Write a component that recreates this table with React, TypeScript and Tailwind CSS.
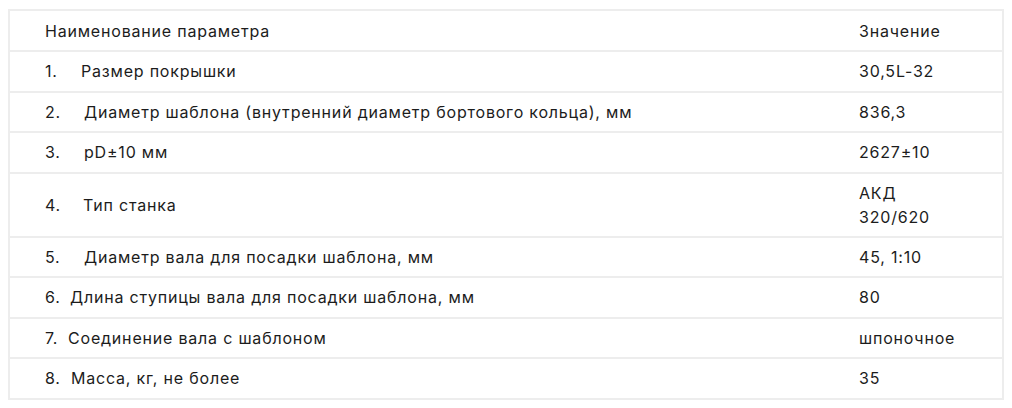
const rows: { n: string; gap: string; name: string; value: string[] }[] = [
  { n: "1.", gap: "pl-[36px]", name: "Размер покрышки", value: ["30,5L-32"] },
  { n: "2.", gap: "pl-[39px]", name: "Диаметр шаблона (внутренний диаметр бортового кольца), мм", value: ["836,3"] },
  { n: "3.", gap: "pl-[39px]", name: "pD±10 мм", value: ["2627±10"] },
  { n: "4.", gap: "pl-[38px]", name: "Тип станка", value: ["АКД", "320/620"] },
  { n: "5.", gap: "pl-[39px]", name: "Диаметр вала для посадки шаблона, мм", value: ["45, 1:10"] },
  { n: "6.", gap: "pl-[25px]", name: "Длина ступицы вала для посадки шаблона, мм", value: ["80"] },
  { n: "7.", gap: "pl-[23px]", name: "Соединение вала с шаблоном", value: ["шпоночное"] },
  { n: "8.", gap: "pl-[26px]", name: "Масса, кг, не более", value: ["35"] },
];

const App = () => (
  <div className="w-[1012px] h-[408px] bg-white pt-[9px] pl-[8px] font-['Inter',sans-serif] text-[16px] leading-[24px] tracking-[0.05em] text-[#1c1c1c]">
    <table className="w-[996px] border-collapse border-2 border-[#ededed]">
      <tbody>
        <tr className="h-[41px] border-b-2 border-[#ededed]">
          <td className="pl-[35px] align-middle">Наименование параметра</td>
          <td className="w-[160px] pl-[16px] align-middle">Значение</td>
        </tr>
        {rows.map((r) => (
          <tr key={r.n} className={`${r.value.length > 1 ? "h-[64px]" : "h-[40.5px]"} border-b-2 border-[#ededed]`}>
            <td className="pl-[35px] align-middle">
              <span className="relative">
                <span className="absolute left-0">{r.n}</span>
                <span className={r.gap}>{r.name}</span>
              </span>
            </td>
            <td className="pl-[16px] align-middle">
              {r.value.map((v) => (
                <div key={v}>{v}</div>
              ))}
            </td>
          </tr>
        ))}
      </tbody>
    </table>
  </div>
);

export default App;
